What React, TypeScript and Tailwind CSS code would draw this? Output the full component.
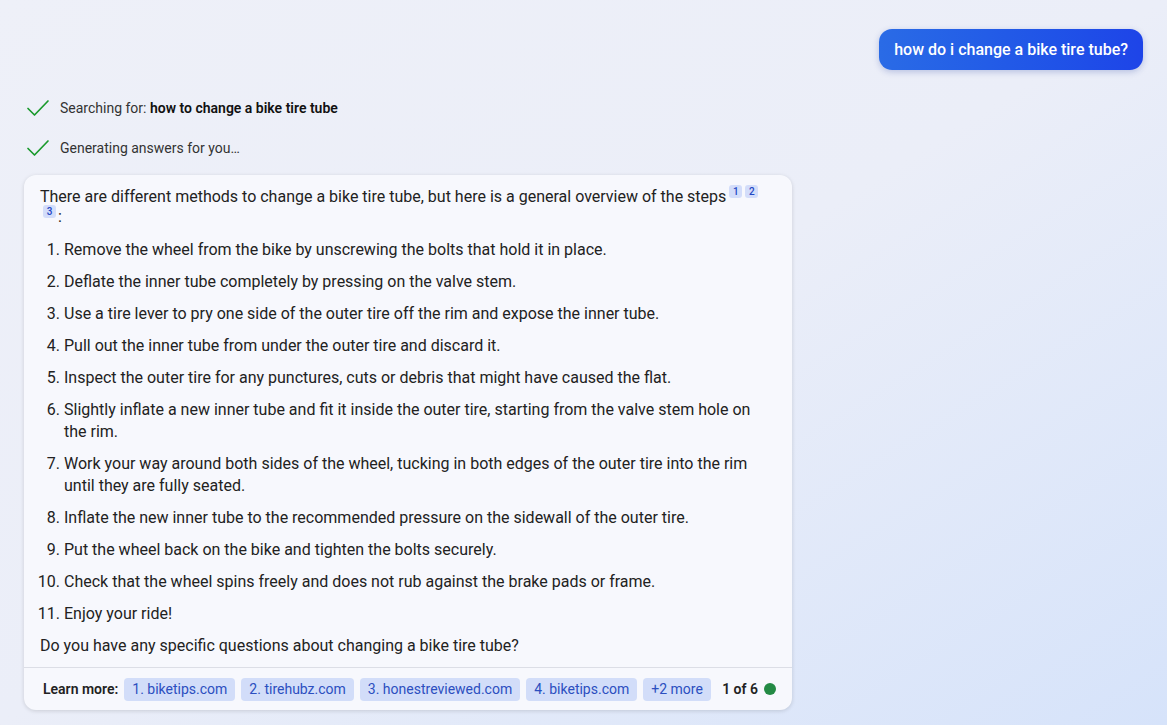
const STEPS = [
  "Remove the wheel from the bike by unscrewing the bolts that hold it in place.",
  "Deflate the inner tube completely by pressing on the valve stem.",
  "Use a tire lever to pry one side of the outer tire off the rim and expose the inner tube.",
  "Pull out the inner tube from under the outer tire and discard it.",
  "Inspect the outer tire for any punctures, cuts or debris that might have caused the flat.",
  "Slightly inflate a new inner tube and fit it inside the outer tire, starting from the valve stem hole on the rim.",
  "Work your way around both sides of the wheel, tucking in both edges of the outer tire into the rim until they are fully seated.",
  "Inflate the new inner tube to the recommended pressure on the sidewall of the outer tire.",
  "Put the wheel back on the bike and tighten the bolts securely.",
  "Check that the wheel spins freely and does not rub against the brake pads or frame.",
  "Enjoy your ride!",
];

const SOURCES = ["1. biketips.com", "2. tirehubz.com", "3. honestreviewed.com", "4. biketips.com", "+2 more"];

function Check() {
  return (
    <svg width="24" height="20" viewBox="0 0 24 20" className="shrink-0">
      <path d="M2 10.5 L8.5 17 L22 3" fill="none" stroke="#1a9a2c" strokeWidth="1.7" strokeLinecap="round" strokeLinejoin="round" />
    </svg>
  );
}

function Cite({ n }: { n: number }) {
  return (
    <span className="inline-flex items-center justify-center align-top relative top-[-2px] ml-[3px] h-[13px] min-w-[13px] px-[3px] rounded-[3px] bg-[#d3ddfa] text-[10px] leading-none font-medium text-[#2448c4]">
      {n}
    </span>
  );
}

export default function App() {
  return (
    <div
      className="w-[1167px] h-[725px] overflow-hidden bg-gradient-to-br from-[#eef0f8] via-[#ebeef8] to-[#d6e3fa] text-[#111]"
      style={{ fontFamily: "Roboto, 'Liberation Sans', sans-serif" }}
    >
      <div className="flex justify-end pt-[29px] pr-[24px]">
        <div className="h-[41px] px-[15px] flex items-center rounded-[13px] bg-gradient-to-r from-[#2a6be6] to-[#1e44e8] text-white text-[16px] font-medium shadow-[0_2px_6px_rgba(30,60,160,0.25)]">
          how do i change a bike tire tube?
        </div>
      </div>

      <div className="pl-[26px] mt-[28px] flex flex-col gap-[20px] text-[14px] text-[#333]">
        <div className="flex items-center gap-[10px] h-[20px]">
          <Check />
          <span>
            Searching for: <b className="font-semibold text-[#111]">how to change a bike tire tube</b>
          </span>
        </div>
        <div className="flex items-center gap-[10px] h-[20px]">
          <Check />
          <span>Generating answers for you…</span>
        </div>
      </div>

      <div className="ml-[24px] mt-[17px] w-[768px] rounded-[12px] bg-[#f7f8fd] shadow-[0_1px_4px_rgba(0,0,0,0.14)]">
        <div className="pt-[12px] px-[16px] pb-[10px] text-[16px] leading-[20px] text-[#222]">
          <p className="pr-[12px]">
            There are different methods to change a bike tire tube, but here is a general overview of the steps
            <Cite n={1} />
            <Cite n={2} />
            <br />
            <Cite n={3} />
            <span className="ml-[2px]">:</span>
          </p>
          <ol className="mt-[12px] flex flex-col gap-[10px]">
            {STEPS.map((s, i) => (
              <li key={i} className="flex leading-[22px]">
                <span className="w-[28px] -ml-[4px] shrink-0 text-right pr-[4px] whitespace-nowrap">{i + 1}.</span>
                <span>{s}</span>
              </li>
            ))}
          </ol>
          <p className="mt-[10px] leading-[22px]">Do you have any specific questions about changing a bike tire tube?</p>
        </div>
        <div className="border-t border-[#dcdee6] h-[43px] flex items-center pl-[19px] pr-[16px] text-[14px]">
          <span className="font-semibold text-[#222] mr-[6px]">Learn more:</span>
          <div className="flex gap-[6px]">
            {SOURCES.map((s) => (
              <span key={s} className="h-[23px] px-[8px] flex items-center rounded-[4px] bg-[#d2ddf9] text-[#2c4fc0]">
                {s}
              </span>
            ))}
          </div>
          <span className="ml-auto font-semibold text-[#222]">1 of 6</span>
          <span className="ml-[6px] w-[12px] h-[12px] rounded-full bg-[#238a44]" />
        </div>
      </div>
    </div>
  );
}
